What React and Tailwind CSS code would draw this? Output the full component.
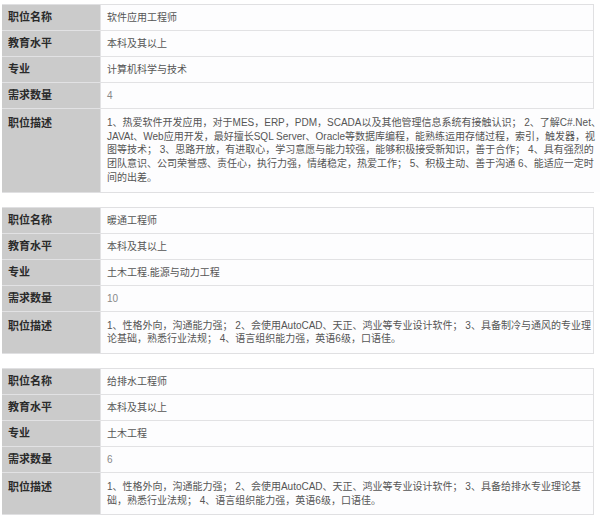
import React from "react";

const jobs = [
  {
    title: "软件应用工程师",
    edu: "本科及其以上",
    major: "计算机科学与技术",
    count: "4",
    desc: [
      "1、热爱软件开发应用，对于MES，ERP，PDM，SCADA以及其他管理信息系统有接触认识； 2、了解C#.Net、",
      "JAVAt、Web应用开发，最好擅长SQL Server、Oracle等数据库编程，能熟练运用存储过程，索引，触发器，视",
      "图等技术； 3、思路开放，有进取心，学习意愿与能力较强，能够积极接受新知识，善于合作； 4、具有强烈的",
      "团队意识、公司荣誉感、责任心，执行力强，情绪稳定，热爱工作； 5、积极主动、善于沟通 6、能适应一定时",
      "间的出差。",
    ],
  },
  {
    title: "暖通工程师",
    edu: "本科及其以上",
    major: "土木工程.能源与动力工程",
    count: "10",
    desc: [
      "1、性格外向，沟通能力强； 2、会使用AutoCAD、天正、鸿业等专业设计软件； 3、具备制冷与通风的专业理",
      "论基础，熟悉行业法规； 4、语言组织能力强，英语6级，口语佳。",
    ],
  },
  {
    title: "给排水工程师",
    edu: "本科及其以上",
    major: "土木工程",
    count: "6",
    desc: [
      "1、性格外向，沟通能力强； 2、会使用AutoCAD、天正、鸿业等专业设计软件； 3、具备给排水专业理论基",
      "础，熟悉行业法规； 4、语言组织能力强，英语6级，口语佳。",
    ],
  },
];

const Row = ({ label, children, tall }) => (
  <div className="flex border-b border-[#e2e2e4] last:border-b-0">
    <div
      className={`w-[98px] shrink-0 bg-[#cbcbcb] pl-[6px] text-[11px] font-bold text-[#2a2a2a] ${
        tall ? "pt-[6px]" : "flex h-[25px] items-center"
      }`}
    >
      {label}
    </div>
    <div
      className={`flex-1 bg-[#fdfdfe] border-l border-[#e2e2e4] pl-[6px] text-[10px] text-[#555] ${
        tall ? "py-[7px] leading-[13.7px]" : "flex h-[25px] items-center"
      }`}
    >
      {children}
    </div>
  </div>
);

const JobTable = ({ job }) => (
  <div className="mx-[2px] w-[592px] border border-[#e0e0e2] border-l-0">
    <Row label="职位名称">{job.title}</Row>
    <Row label="教育水平">{job.edu}</Row>
    <Row label="专业">{job.major}</Row>
    <Row label="需求数量">
      <span className="text-[#888]">{job.count}</span>
    </Row>
    <Row label="职位描述" tall>
      {job.desc.map((line, i) => (
        <div key={i} className="whitespace-nowrap">
          {line}
        </div>
      ))}
    </Row>
  </div>
);

export default function App() {
  return (
    <div
      className="w-[600px] h-[515px] bg-white pt-[4px] flex flex-col gap-[14px] overflow-hidden"
      style={{ fontFamily: '"Liberation Sans", "Noto Sans CJK SC", sans-serif' }}
    >
      {jobs.map((job, i) => (
        <JobTable key={i} job={job} />
      ))}
    </div>
  );
}
